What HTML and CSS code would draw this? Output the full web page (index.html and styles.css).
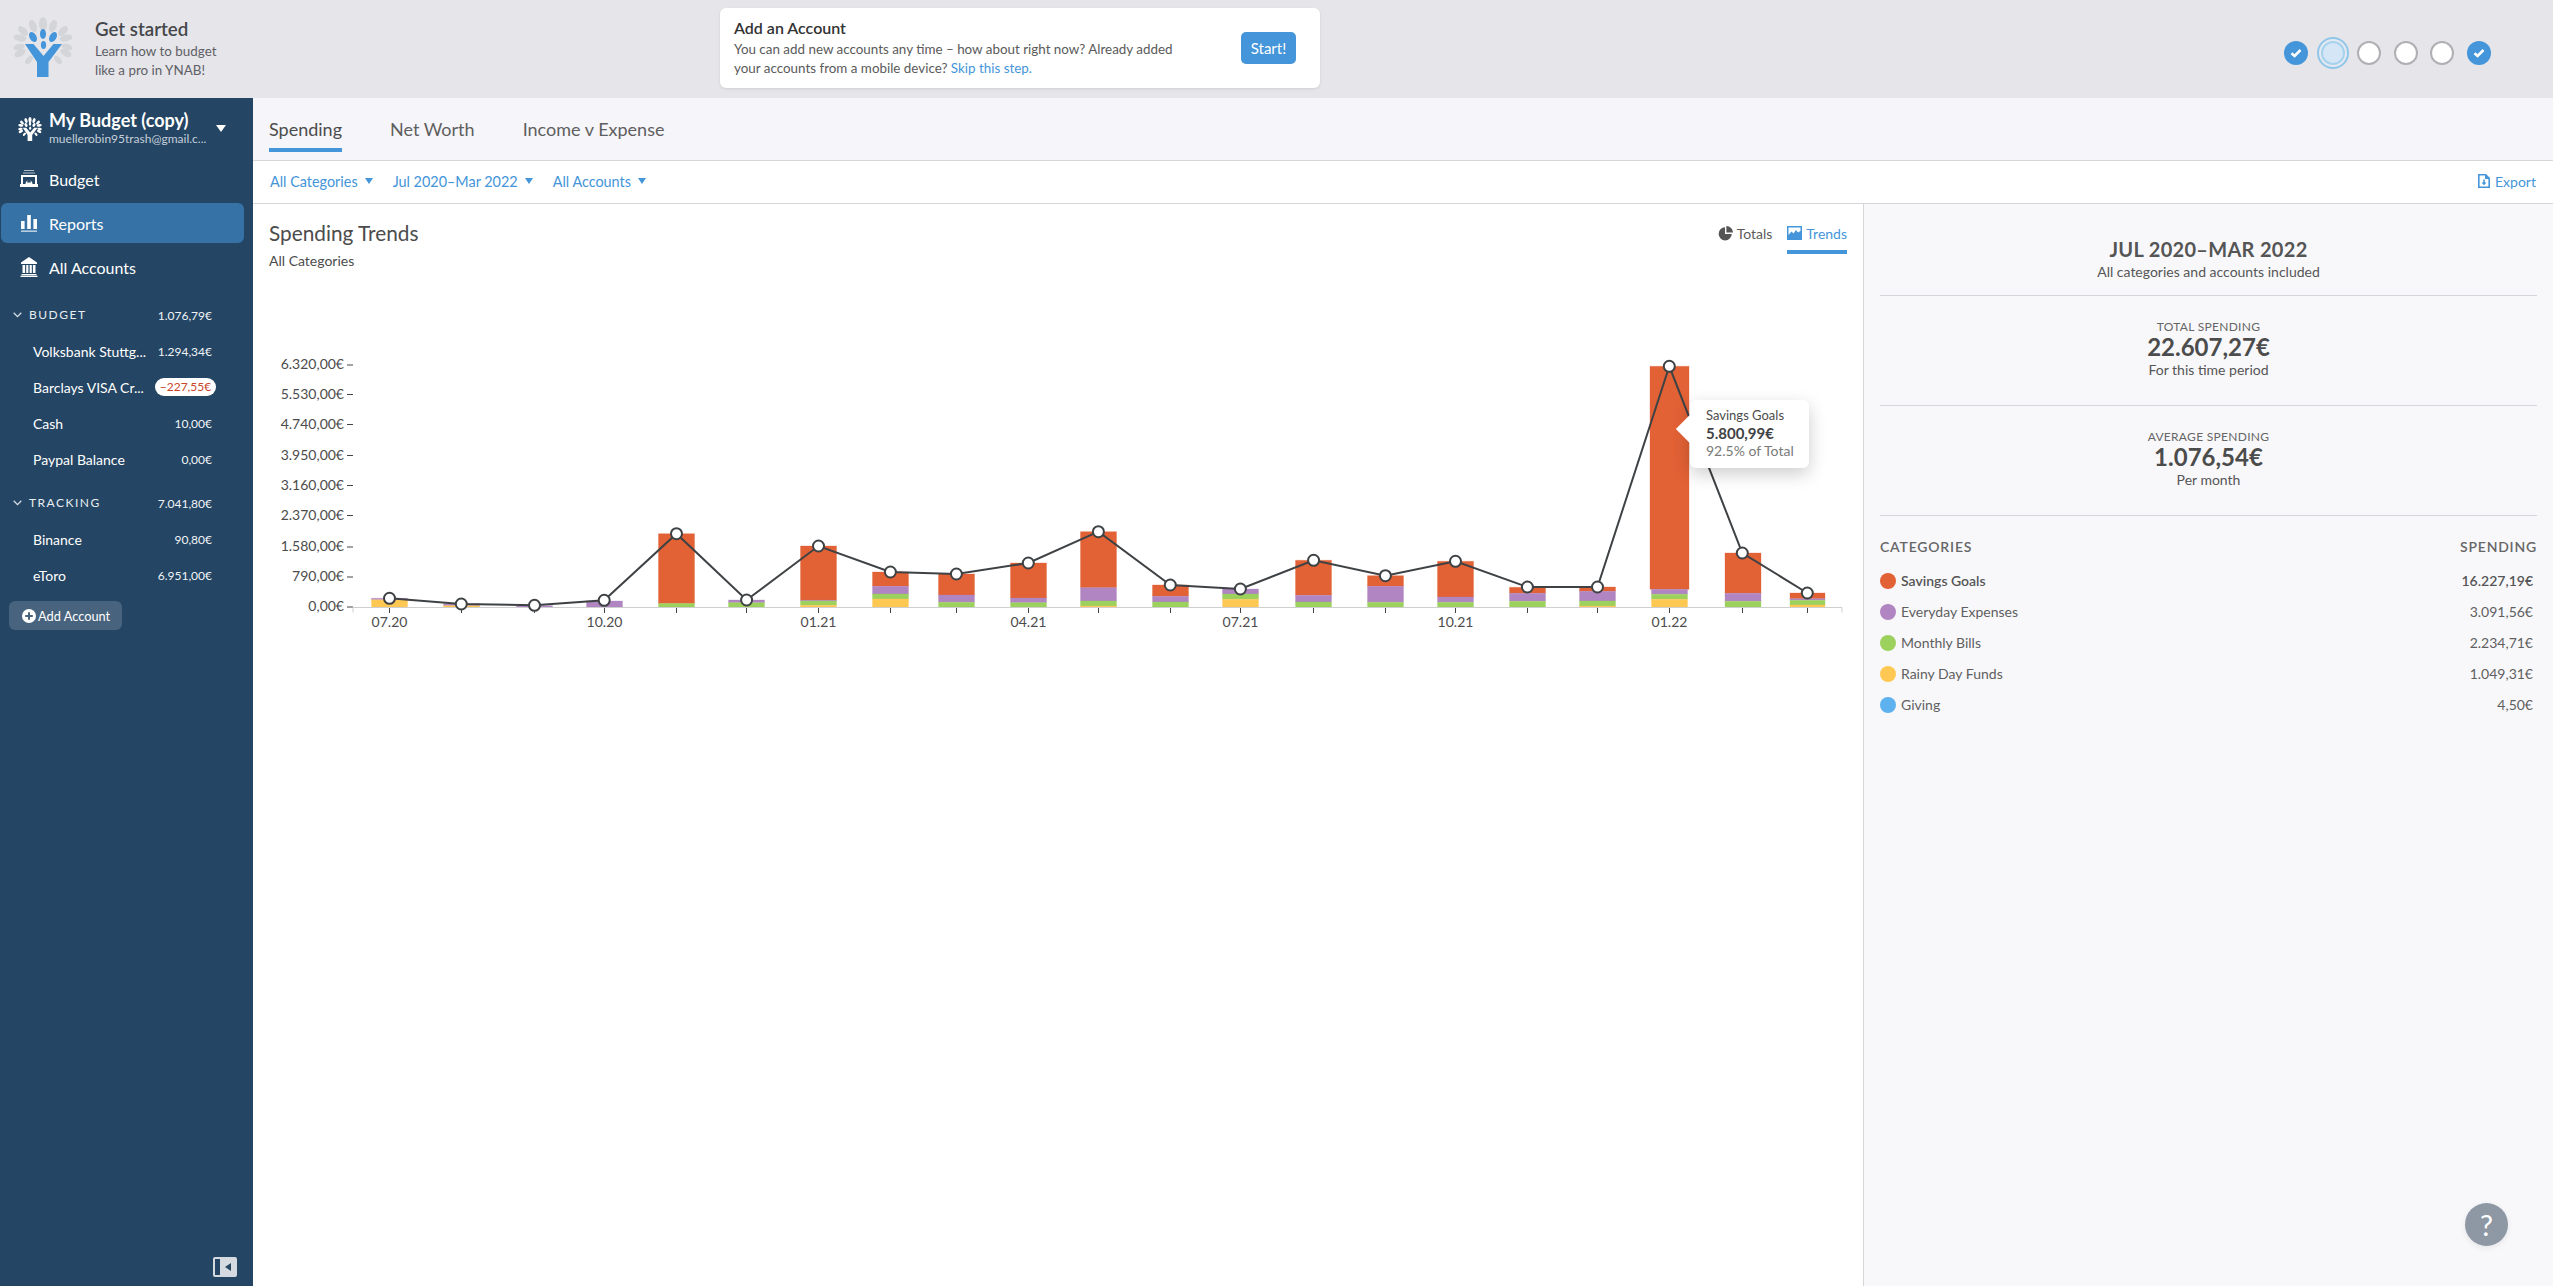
FILE: index.html
```html
<!DOCTYPE html>
<html lang="en">
<head>
<meta charset="utf-8">
<title>Reports - YNAB</title>
<link rel="stylesheet" href="styles.css">
</head>
<body>
<svg class="defs" width="0" height="0" aria-hidden="true">
  <symbol id="tree" viewBox="13 17 60 60">
    <g class="tree-outer">
      <ellipse cx="43" cy="24" rx="4" ry="7"/>
      <ellipse cx="33" cy="26" rx="3.6" ry="6.4" transform="rotate(-20 33 26)"/>
      <ellipse cx="53" cy="26" rx="3.6" ry="6.4" transform="rotate(20 53 26)"/>
      <ellipse cx="23" cy="31" rx="3.4" ry="6" transform="rotate(-45 23 31)"/>
      <ellipse cx="63" cy="31" rx="3.4" ry="6" transform="rotate(45 63 31)"/>
      <ellipse cx="20" cy="38" rx="3.4" ry="6.4" transform="rotate(-80 20 38)"/>
      <ellipse cx="66" cy="38" rx="3.4" ry="6.4" transform="rotate(80 66 38)"/>
      <ellipse cx="19" cy="47" rx="3" ry="5.6" transform="rotate(75 19 47)"/>
      <ellipse cx="67" cy="47" rx="3" ry="5.6" transform="rotate(-75 67 47)"/>
      <ellipse cx="20" cy="53" rx="3.4" ry="6" transform="rotate(60 20 53)"/>
      <ellipse cx="66" cy="53" rx="3.4" ry="6" transform="rotate(-60 66 53)"/>
      <ellipse cx="29" cy="60" rx="2.8" ry="5" transform="rotate(40 29 60)"/>
      <ellipse cx="58" cy="60" rx="2.8" ry="5" transform="rotate(-40 58 60)"/>
    </g>
    <g class="tree-inner">
      <ellipse cx="43" cy="34" rx="3" ry="5"/>
      <ellipse cx="33" cy="37" rx="3.4" ry="5.4" transform="rotate(-30 33 37)"/>
      <ellipse cx="53" cy="37" rx="3.4" ry="5.4" transform="rotate(30 53 37)"/>
      <ellipse cx="43.500" cy="45" rx="2.600" ry="4"/>
      <polygon points="25,44 33.500,44 43.500,56 53.500,44 62,44 48.500,62 48.500,77 37,77 37,62"/>
    </g>
  </symbol>
</svg>

<header class="topbar">
  <div class="getstarted">
    <svg class="logo" width="60" height="60"><use href="#tree"/></svg>
    <div class="gs-text">
      <div class="gs-title">Get started</div>
      <div class="gs-sub">Learn how to budget<br>like a pro in YNAB!</div>
    </div>
  </div>
  <div class="stepcard">
    <div class="stepcard-text">
      <div class="stepcard-title">Add an Account</div>
      <div class="stepcard-body">You can add new accounts any time – how about right now? Already added<br>your accounts from a mobile device? <span class="link">Skip this step.</span></div>
    </div>
    <div class="start-btn">Start!</div>
  </div>
  <div class="steps">
    <span class="step done"><svg width="12" height="10" viewBox="0 0 12 10"><path class="check" d="M1.5 5.2 4.6 8 10.5 2"/></svg></span>
    <span class="step current"><i></i></span>
    <span class="step"></span>
    <span class="step"></span>
    <span class="step"></span>
    <span class="step done"><svg width="12" height="10" viewBox="0 0 12 10"><path class="check" d="M1.5 5.2 4.6 8 10.5 2"/></svg></span>
  </div>
</header>

<div class="app">
  <aside class="sidebar">
    <div class="budget-head">
      <svg class="mini-tree" width="24" height="24"><use href="#tree"/></svg>
      <div class="budget-names">
        <div class="budget-name">My Budget (copy)</div>
        <div class="budget-mail">muellerobin95trash@gmail.c...</div>
      </div>
      <span class="caret-white"></span>
    </div>
    <nav class="nav">
      <div class="nav-item">
        <svg class="nav-icon" width="18" height="18" viewBox="0 0 18 18"><path d="M4 0h10v1H4zM3 2.5h12v1H3z" opacity=".65"/><path fill-rule="evenodd" d="M1 5h16v9h1v3H0v-3h1zm2 2v7h2.500a3.500 3.500 0 0 1 7 0H15V7zm6 3.500a2 2 0 0 0-2 2h4a2 2 0 0 0-2-2z"/></svg>
        Budget
      </div>
      <div class="nav-item active">
        <svg class="nav-icon" width="18" height="18" viewBox="0 0 18 18"><path d="M1 7h3.600v8H1zM7.200 1h3.600v14H7.200zM13.400 5H17v10h-3.600z"/><path d="M1 16.400h16V18H1z" opacity=".65"/></svg>
        Reports
      </div>
      <div class="nav-item">
        <svg class="nav-icon" width="18" height="20" viewBox="0 0 18 20"><path d="M9 0 17 5.500V7H1V5.500z"/><path d="M2.500 8h2.600v8H2.500zM6.200 8h2.200v8H6.200zM9.600 8h2.200v8H9.600zM12.900 8h2.600v8h-2.600zM1.500 17h15v1.200h-15zM.5 18.800h17V20H.5z"/></svg>
        All Accounts
      </div>
    </nav>
    <section class="acct-group">
      <div class="acct-head"><svg class="chev" width="9" height="6" viewBox="0 0 9 6"><path d="M.7.8 4.500 4.600 8.300.8"/></svg><span class="acct-head-name">BUDGET</span><span class="acct-amt">1.076,79€</span></div>
      <div class="acct"><span class="acct-name">Volksbank Stuttg...</span><span class="acct-amt">1.294,34€</span></div>
      <div class="acct"><span class="acct-name">Barclays VISA Cr...</span><span class="pill">−227,55€</span></div>
      <div class="acct"><span class="acct-name">Cash</span><span class="acct-amt">10,00€</span></div>
      <div class="acct"><span class="acct-name">Paypal Balance</span><span class="acct-amt">0,00€</span></div>
    </section>
    <section class="acct-group">
      <div class="acct-head"><svg class="chev" width="9" height="6" viewBox="0 0 9 6"><path d="M.7.8 4.500 4.600 8.300.8"/></svg><span class="acct-head-name">TRACKING</span><span class="acct-amt">7.041,80€</span></div>
      <div class="acct"><span class="acct-name">Binance</span><span class="acct-amt">90,80€</span></div>
      <div class="acct"><span class="acct-name">eToro</span><span class="acct-amt">6.951,00€</span></div>
    </section>
    <div class="add-btn">
      <svg width="14" height="14" viewBox="0 0 14 14"><path fill-rule="evenodd" d="M7 0a7 7 0 1 1 0 14A7 7 0 0 1 7 0zm-1 3.200v2.800H3.200v2H6v2.800h2V8h2.800V6H8V3.200z"/></svg>
      Add Account
    </div>
    <div class="collapse"><i class="collapse-bar"></i><i class="collapse-tri"></i></div>
  </aside>

  <main class="main">
    <div class="tabs">
      <div class="tab active">Spending</div>
      <div class="tab">Net Worth</div>
      <div class="tab">Income v Expense</div>
    </div>
    <div class="filters">
      <span class="filter">All Categories<i class="caret"></i></span>
      <span class="filter">Jul 2020–Mar 2022<i class="caret"></i></span>
      <span class="filter">All Accounts<i class="caret"></i></span>
      <span class="export">
        <svg width="12" height="14" viewBox="0 0 12 14"><path fill-rule="evenodd" d="M0 0h8l4 4v10H0zm1.600 1.600v10.800h8.800V5H7V1.600zM5.200 5.500h1.600v3H8.600L6 11.200 3.400 8.500h1.800z"/></svg>
        Export
      </span>
    </div>
    <div class="content">
      <section class="chart">
        <div class="chart-head">
          <div>
            <h1 class="chart-title">Spending Trends</h1>
            <div class="chart-sub">All Categories</div>
          </div>
          <div class="modes">
            <span class="mode">
              <svg width="15" height="15" viewBox="0 0 15 15"><path d="M7 1.200A6.600 6.600 0 1 0 13.800 8H7z"/><path d="M8.400 0v6.600H15A6.600 6.600 0 0 0 8.400 0z"/></svg>
              Totals
            </span>
            <span class="mode active">
              <svg width="15" height="14" viewBox="0 0 15 14"><path fill-rule="evenodd" d="M0 0h15v14H0zm1.500 1.500V9l3-3.500 2 2 2.500-3.500 2 2.500 2.500-1.500V1.500z"/></svg>
              Trends
            </span>
          </div>
        </div>
        <svg class="plot" width="1610" height="350" viewBox="253 300 1610 350">
          <g class="ylabels">
            <text x="344" y="369">6.320,00€</text><text x="344" y="399">5.530,00€</text><text x="344" y="429">4.740,00€</text><text x="344" y="460">3.950,00€</text><text x="344" y="490">3.160,00€</text><text x="344" y="520">2.370,00€</text><text x="344" y="551">1.580,00€</text><text x="344" y="581">790,00€</text><text x="344" y="611">0,00€</text>
          </g>
          <path class="yticks" d="M347 365h6M347 394.500h6M347 424.500h6M347 455.500h6M347 485.500h6M347 515.500h6M347 547h6M347 577h6M347 607h6"/>

          <rect class="y" x="371.500" y="599.300" width="36" height="8"/><rect class="p" x="371.500" y="598.300" width="36" height="1"/>
          <rect class="p" x="443.500" y="603.700" width="36" height="2"/><rect class="y" x="443.500" y="605.700" width="36" height="1.600"/>
          <rect class="p" x="516.500" y="605.700" width="36" height="1.600"/>
          <rect class="p" x="586.500" y="601" width="36" height="6.300"/>
          <rect class="o" x="658.500" y="533.700" width="36" height="69.800"/><rect class="g" x="658.500" y="603.500" width="36" height="3.800"/>
          <rect class="p" x="728.500" y="600" width="36" height="2.700"/><rect class="g" x="728.500" y="602.700" width="36" height="4.600"/>
          <rect class="o" x="800.500" y="546" width="36" height="54.300"/><rect class="p" x="800.500" y="600.300" width="36" height="0.700"/><rect class="g" x="800.500" y="601" width="36" height="4.300"/><rect class="y" x="800.500" y="605.300" width="36" height="2"/>
          <rect class="o" x="872.500" y="572" width="36" height="14.300"/><rect class="p" x="872.500" y="586.300" width="36" height="7.700"/><rect class="g" x="872.500" y="594" width="36" height="5"/><rect class="y" x="872.500" y="599" width="36" height="8.300"/>
          <rect class="o" x="938.500" y="574" width="36" height="21"/><rect class="p" x="938.500" y="595" width="36" height="7.300"/><rect class="g" x="938.500" y="602.300" width="36" height="5"/>
          <rect class="o" x="1010.500" y="563" width="36" height="35"/><rect class="p" x="1010.500" y="598" width="36" height="4.700"/><rect class="g" x="1010.500" y="602.700" width="36" height="4.600"/>
          <rect class="o" x="1080.500" y="531.700" width="36" height="56"/><rect class="p" x="1080.500" y="587.700" width="36" height="13.300"/><rect class="g" x="1080.500" y="601" width="36" height="5"/><rect class="y" x="1080.500" y="606" width="36" height="1.300"/>
          <rect class="o" x="1152.500" y="585" width="36" height="11.300"/><rect class="p" x="1152.500" y="596.300" width="36" height="5.700"/><rect class="g" x="1152.500" y="602" width="36" height="5.300"/>
          <rect class="p" x="1222.500" y="589" width="36" height="5"/><rect class="g" x="1222.500" y="594" width="36" height="5.300"/><rect class="y" x="1222.500" y="599.300" width="36" height="8"/>
          <rect class="o" x="1295.500" y="560.300" width="36" height="35"/><rect class="p" x="1295.500" y="595.300" width="36" height="6.700"/><rect class="g" x="1295.500" y="602" width="36" height="5.300"/>
          <rect class="o" x="1367.500" y="575.700" width="36" height="10.600"/><rect class="p" x="1367.500" y="586.300" width="36" height="16"/><rect class="g" x="1367.500" y="602.300" width="36" height="5"/>
          <rect class="o" x="1437.500" y="561.300" width="36" height="35.700"/><rect class="p" x="1437.500" y="597" width="36" height="5.300"/><rect class="g" x="1437.500" y="602.300" width="36" height="5"/>
          <rect class="o" x="1509.500" y="587.300" width="36" height="6"/><rect class="p" x="1509.500" y="593.300" width="36" height="8"/><rect class="g" x="1509.500" y="601.300" width="36" height="6"/>
          <rect class="o" x="1579.500" y="587" width="36" height="4.300"/><rect class="p" x="1579.500" y="591.300" width="36" height="9.700"/><rect class="g" x="1579.500" y="601" width="36" height="5"/><rect class="y" x="1579.500" y="606" width="36" height="1.300"/>
          <rect class="o" x="1650" y="366.300" width="39" height="223"/><rect class="p" x="1651.500" y="589.300" width="36" height="5"/><rect class="g" x="1651.500" y="594.300" width="36" height="5"/><rect class="y" x="1651.500" y="599.300" width="36" height="8"/>
          <rect class="o" x="1725" y="553" width="36" height="40.300"/><rect class="p" x="1725" y="593.300" width="36" height="8"/><rect class="g" x="1725" y="601.300" width="36" height="6"/>
          <rect class="o" x="1790" y="593" width="35" height="5.700"/><rect class="p" x="1790" y="598.700" width="35" height="1.600"/><rect class="g" x="1790" y="600.300" width="35" height="4.700"/><rect class="y" x="1790" y="605" width="35" height="2.300"/>

          <path class="axis" d="M353 607.500H1842M353 607.500v5M1842 607.500v5"/>
          <path class="xticks" d="M389.500 608v5M461.500 608v5M534.500 608v5M604.500 608v5M676.500 608v5M746.500 608v5M818.500 608v5M890.500 608v5M956.500 608v5M1028.500 608v5M1098.500 608v5M1170.500 608v5M1240.500 608v5M1313.500 608v5M1385.500 608v5M1455.500 608v5M1527.500 608v5M1597.500 608v5M1669.500 608v5M1742.500 608v5M1807.500 608v5"/>
          <g class="xlabels">
            <text x="389.500" y="627">07.20</text><text x="604.500" y="627">10.20</text><text x="818.500" y="627">01.21</text><text x="1028.500" y="627">04.21</text><text x="1240.500" y="627">07.21</text><text x="1455.500" y="627">10.21</text><text x="1669.500" y="627">01.22</text>
          </g>

          <polyline class="line" points="389.500,598.300 461.300,604 534.500,605.300 604.200,600.300 676.500,533.700 746.600,600 818.500,546 890.400,572 956.400,574 1028.300,563 1098.400,531.700 1170.300,585 1240.400,589 1313.600,560.300 1385.400,575.700 1455.500,561.300 1527.400,587 1597.500,587 1669.300,366.300 1742.300,553 1807.300,593"/>
          <g class="dots">
            <circle cx="389.500" cy="598.300" r="5.500"/><circle cx="461.300" cy="604" r="5.500"/><circle cx="534.500" cy="605.300" r="5.500"/><circle cx="604.200" cy="600.300" r="5.500"/><circle cx="676.500" cy="533.700" r="5.500"/><circle cx="746.600" cy="600" r="5.500"/><circle cx="818.500" cy="546" r="5.500"/><circle cx="890.400" cy="572" r="5.500"/><circle cx="956.400" cy="574" r="5.500"/><circle cx="1028.300" cy="563" r="5.500"/><circle cx="1098.400" cy="531.700" r="5.500"/><circle cx="1170.300" cy="585" r="5.500"/><circle cx="1240.400" cy="589" r="5.500"/><circle cx="1313.600" cy="560.300" r="5.500"/><circle cx="1385.400" cy="575.700" r="5.500"/><circle cx="1455.500" cy="561.300" r="5.500"/><circle cx="1527.400" cy="587" r="5.500"/><circle cx="1597.500" cy="587" r="5.500"/><circle cx="1669.300" cy="366.300" r="5.500"/><circle cx="1742.300" cy="553" r="5.500"/><circle cx="1807.300" cy="593" r="5.500"/>
          </g>
        </svg>
        <div class="tooltip">
          <div class="tip-name">Savings Goals</div>
          <div class="tip-amt">5.800,99€</div>
          <div class="tip-pct">92.5% of Total</div>
        </div>
      </section>

      <aside class="summary">
        <div class="sum-block sum-head">
          <div class="sum-range">JUL 2020–MAR 2022</div>
          <div class="sum-note">All categories and accounts included</div>
        </div>
        <div class="sum-block sum-total">
          <div class="sum-label">TOTAL SPENDING</div>
          <div class="sum-value">22.607,27€</div>
          <div class="sum-note">For this time period</div>
        </div>
        <div class="sum-block sum-total">
          <div class="sum-label">AVERAGE SPENDING</div>
          <div class="sum-value">1.076,54€</div>
          <div class="sum-note">Per month</div>
        </div>
        <div class="cat-head"><span>CATEGORIES</span><span>SPENDING</span></div>
        <div class="cat strong"><i class="dot dot-o"></i><span class="cat-name">Savings Goals</span><span class="cat-amt">16.227,19€</span></div>
        <div class="cat"><i class="dot dot-p"></i><span class="cat-name">Everyday Expenses</span><span class="cat-amt">3.091,56€</span></div>
        <div class="cat"><i class="dot dot-g"></i><span class="cat-name">Monthly Bills</span><span class="cat-amt">2.234,71€</span></div>
        <div class="cat"><i class="dot dot-y"></i><span class="cat-name">Rainy Day Funds</span><span class="cat-amt">1.049,31€</span></div>
        <div class="cat"><i class="dot dot-b"></i><span class="cat-name">Giving</span><span class="cat-amt">4,50€</span></div>
        <div class="help">?</div>
      </aside>
    </div>
  </main>
</div>
</body>
</html>
```
FILE: styles.css
```css
* { box-sizing: border-box; }
html, body { margin: 0; height: 100%; overflow: hidden; }
body { font-family: Lato, "Open Sans", sans-serif; font-size: 14px; color: #4c4c4c; display: flex; flex-direction: column; height: 1286px; background: #fff; }
.defs { position: absolute; }
i { display: block; font-style: normal; }

/* top bar */
.topbar { height: 98px; flex: none; background: #e5e5ea; display: flex; align-items: flex-start; }
.getstarted { width: 720px; flex: none; display: flex; padding: 17px 0 0 13px; }
.logo { --outer: #d4d5d9; --inner: #4495d9; display: block; }
.tree-outer { fill: var(--outer); }
.tree-inner { fill: var(--inner); }
.gs-text { margin-left: 22px; }
.gs-title { font-size: 18.700px; font-weight: 600; line-height: 24px; color: #45484a; }
.gs-sub { font-size: 13.400px; line-height: 19px; color: #5f5f66; margin-top: 1px; }
.stepcard { width: 600px; height: 80px; flex: none; margin-top: 8px; background: #fff; border-radius: 6px; box-shadow: 0 1px 3px rgba(0,0,0,.1); display: flex; justify-content: space-between; padding: 8px 24px 0 14px; }
.stepcard-title { font-size: 16px; font-weight: 600; line-height: 24px; color: #333; }
.stepcard-body { font-size: 13.400px; line-height: 19px; color: #5a5a5a; }
.link { color: #4495d9; }
.start-btn { width: 55px; height: 32px; margin-top: 16px; background: #4495d9; color: #fff; border-radius: 5px; font-size: 15px; line-height: 32px; text-align: center; }
.steps { display: flex; align-items: center; gap: 12.600px; margin-left: 964px; margin-top: 37px; }
.step { width: 24px; height: 24px; border-radius: 50%; background: #fff; border: 2.500px solid #b0b0b4; display: flex; align-items: center; justify-content: center; flex: none; }
.step.done { background: #4495d9; border: 0; }
.check { fill: none; stroke: #fff; stroke-width: 2.600; }
.step.current { width: 32px; height: 32px; margin: 0 -4px; background: #e5e9f0; border: 2px solid #8fc6ea; }
.step.current i { width: 24px; height: 24px; border-radius: 50%; background: #d5e7f6; border: 2px solid #a6d2ee; }

.app { flex: 1; display: flex; min-height: 0; }

/* sidebar */
.sidebar { width: 253px; flex: none; background: #244563; color: #fff; position: relative; }
.budget-head { height: 61px; display: flex; align-items: flex-start; padding: 11px 0 0 18px; position: relative; }
.mini-tree { --outer: #fff; --inner: #fff; margin-top: 8px; margin-right: 7px; flex: none; }
.budget-name { font-size: 18px; font-weight: 700; line-height: 23px; white-space: nowrap; }
.budget-mail { font-size: 12px; line-height: 14px; color: #c4cfda; white-space: nowrap; }
.caret-white { position: absolute; left: 216px; top: 27px; border-style: solid; border-width: 7px 5.500px 0; border-color: #fff transparent transparent; }
.nav { display: flex; flex-direction: column; gap: 4px; padding: 0 9px 0 1px; }
.nav-item { height: 40px; display: flex; align-items: center; gap: 11px; padding-left: 19px; font-size: 16px; border-radius: 6px; }
.nav-item.active { background: #3672a6; }
.nav-icon { fill: #fff; flex: none; }
.acct-group { margin-bottom: 8px; }
.nav + .acct-group { margin-top: 10px; }
.acct-head { height: 36px; display: flex; align-items: center; padding: 0 41px 0 13px; }
.chev { fill: none; stroke: #d5dde5; stroke-width: 1.300; margin-right: 7px; flex: none; }
.acct-head-name { flex: 1; font-size: 12px; line-height: 14px; letter-spacing: 1.500px; color: #e8edf2; }
.acct { height: 36px; display: flex; align-items: center; justify-content: space-between; padding: 0 41px 0 33px; }
.acct-name { font-size: 14px; white-space: nowrap; color: #fff; }
.acct-amt { font-size: 12px; color: #f1f4f7; white-space: nowrap; }
.pill { background: #fff; color: #c8452a; font-size: 12px; line-height: 18px; height: 18px; width: 61px; border-radius: 9px; text-align: center; margin-right: -4px; white-space: nowrap; }
.add-btn { width: 113px; height: 29px; margin: 3px 0 0 9px; background: #48637e; border-radius: 6px; display: flex; align-items: center; gap: 2px; padding: 1px 0 0 13px; font-size: 12.800px; color: #fff; white-space: nowrap; }
.add-btn svg { fill: #fff; flex: none; }
.collapse { position: absolute; right: 16px; bottom: 9px; width: 24px; height: 20px; background: #d5dae0; border-radius: 2px; }
.collapse-bar { position: absolute; left: 2px; top: 2px; width: 5px; height: 16px; background: #244563; }
.collapse-tri { position: absolute; left: 12px; top: 6px; border-style: solid; border-width: 4px 6px 4px 0; border-color: transparent #244563 transparent transparent; }

/* main */
.main { flex: 1; min-width: 0; display: flex; flex-direction: column; }
.tabs { height: 63px; flex: none; background: #f5f5fa; border-bottom: 1px solid #d6d6da; display: flex; gap: 48px; padding-left: 16px; }
.tab { height: 54px; font-size: 18px; line-height: 62px; color: #5f5f5f; white-space: nowrap; }
.tab.active { color: #4c4c4c; border-bottom: 4px solid #4495d9; }
.filters { height: 43px; flex: none; border-bottom: 1px solid #d6d6da; display: flex; align-items: center; gap: 20px; padding: 0 17px 2px 17px; color: #4495d9; font-size: 14.400px; }
.filter { display: flex; align-items: center; gap: 7px; white-space: nowrap; }
.caret { border-style: solid; border-width: 6px 4px 0; border-color: #4495d9 transparent transparent; }
.export { margin-left: auto; display: flex; align-items: center; gap: 5px; font-size: 14px; }
.export svg { fill: #4495d9; }

.content { flex: 1; display: flex; min-height: 0; }
.chart { flex: 1; min-width: 0; position: relative; }
.chart-head { height: 96px; display: flex; justify-content: space-between; padding: 17px 16px 0; }
.chart-title { margin: 0; font-size: 20.800px; font-weight: 400; line-height: 24px; color: #4c4c4c; }
.chart-sub { font-size: 14px; line-height: 20px; margin-top: 6px; }
.modes { display: flex; gap: 15px; height: 33px; }
.mode { display: flex; align-items: flex-start; gap: 4px; font-size: 14px; line-height: 20px; height: 33px; padding-top: 3px; color: #5a5a5a; }
.mode svg { fill: #555; margin-top: 2px; }
.mode.active { color: #4495d9; border-bottom: 4px solid #4495d9; }
.mode.active svg { fill: #4495d9; }
.plot { display: block; }
.ylabels text { text-anchor: end; font-size: 14px; fill: #4c4c4c; }
.xlabels text { text-anchor: middle; font-size: 14px; fill: #4c4c4c; }
.yticks, .xticks { stroke: #444; stroke-width: 1; fill: none; }
.axis { stroke: #cfcfcf; stroke-width: 1; fill: none; }
.o, .p, .g, .y { stroke-width: 1; stroke-opacity: .3; }
.o { fill: #e26135; stroke: #e26135; }
.p { fill: #b085c2; stroke: #b085c2; }
.g { fill: #9dd15e; stroke: #9dd15e; }
.y { fill: #ffc853; stroke: #ffc853; }
.line { fill: none; stroke: #3f4244; stroke-width: 2; }
.dots circle { fill: #fff; stroke: #3f4244; stroke-width: 2; }
.tooltip { position: absolute; left: 1437px; top: 196px; width: 119px; height: 68px; background: #fff; border-radius: 6px; box-shadow: 0 6px 18px rgba(0,0,0,.2); padding: 6px 0 0 16px; white-space: nowrap; }
.tooltip::before { content: ""; position: absolute; left: -10px; top: 19px; width: 20px; height: 20px; background: #fff; transform: rotate(45deg); }
.tooltip div { position: relative; }
.tip-name { font-size: 13px; line-height: 18px; }
.tip-amt { font-size: 15px; font-weight: 700; line-height: 18px; color: #3f4244; }
.tip-pct { font-size: 14px; line-height: 18px; color: #7a7a7a; }

/* summary */
.summary { width: 690px; flex: none; background: #f8f8fb; border-left: 1px solid #d6d6da; padding: 0 16px; position: relative; }
.sum-block { text-align: center; border-bottom: 1px solid #d6d6da; }
.sum-head { height: 92px; padding-top: 32px; }
.sum-total { height: 110px; padding-top: 23px; }
.sum-range { font-size: 20px; font-weight: 700; line-height: 26px; color: #555; letter-spacing: .3px; }
.sum-note { font-size: 14px; line-height: 20px; color: #555; }
.sum-label { font-size: 12px; line-height: 16px; letter-spacing: .3px; color: #666; }
.sum-value { font-size: 24px; font-weight: 700; line-height: 24px; color: #4c4c4c; margin-bottom: 1px; }
.cat-head { display: flex; justify-content: space-between; margin-top: 21px; margin-bottom: 8px; font-size: 14px; font-weight: 600; letter-spacing: .8px; line-height: 20px; color: #666; }
.cat { height: 31px; display: flex; align-items: center; padding-right: 4px; font-size: 14px; color: #5f5f5f; }
.cat.strong { font-weight: 600; color: #555; }
.cat-name { flex: 1; margin-left: 5px; }
.dot { width: 16px; height: 16px; border-radius: 50%; flex: none; }
.dot-o { background: #e26135; }
.dot-p { background: #b085c2; }
.dot-g { background: #9dd15e; }
.dot-y { background: #ffc853; }
.dot-b { background: #5cb1ee; }
.help { position: absolute; right: 45px; bottom: 40px; width: 43px; height: 43px; border-radius: 50%; background: #8e98a4; color: #fff; font-size: 29px; font-weight: 400; line-height: 43px; text-align: center; box-shadow: 0 2px 6px rgba(0,0,0,.08); }
```
